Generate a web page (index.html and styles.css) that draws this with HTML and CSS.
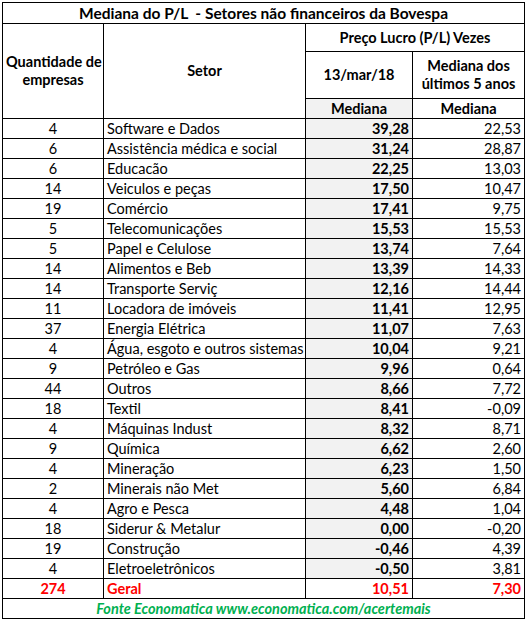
FILE: index.html
```html
<!DOCTYPE html>
<html lang="pt">
<head>
  <meta charset="UTF-8" />
  <title>Mediana do P/L - Setores não financeiros da Bovespa</title>
  <link rel="stylesheet" href="styles.css">
</head>
<body>

  <table class="pl-table">
    <colgroup>
      <col class="c-qtd">
      <col class="c-setor">
      <col class="c-atual">
      <col class="c-hist">
    </colgroup>
    <thead>
      <tr class="title-row">
        <th colspan="4">Mediana do P/L&nbsp; - Setores não financeiros da Bovespa</th>
      </tr>
      <tr class="h-row1">
        <th rowspan="3">Quantidade de<br>empresas</th>
        <th rowspan="3">Setor</th>
        <th colspan="2">Preço Lucro (P/L) Vezes</th>
      </tr>
      <tr class="h-row2">
        <th>13/mar/18</th>
        <th>Mediana dos<br>últimos 5 anos</th>
      </tr>
      <tr class="h-row3">
        <th class="shade">Mediana</th>
        <th>Mediana</th>
      </tr>
    </thead>
    <tbody>
      <tr><td class="qtd">4</td><td class="setor">Software e Dados</td><td class="atual">39,28</td><td class="hist">22,53</td></tr>
      <tr><td class="qtd">6</td><td class="setor">Assistência médica e social</td><td class="atual">31,24</td><td class="hist">28,87</td></tr>
      <tr><td class="qtd">6</td><td class="setor">Educacão</td><td class="atual">22,25</td><td class="hist">13,03</td></tr>
      <tr><td class="qtd">14</td><td class="setor">Veiculos e peças</td><td class="atual">17,50</td><td class="hist">10,47</td></tr>
      <tr><td class="qtd">19</td><td class="setor">Comércio</td><td class="atual">17,41</td><td class="hist">9,75</td></tr>
      <tr><td class="qtd">5</td><td class="setor">Telecomunicações</td><td class="atual">15,53</td><td class="hist">15,53</td></tr>
      <tr><td class="qtd">5</td><td class="setor">Papel e Celulose</td><td class="atual">13,74</td><td class="hist">7,64</td></tr>
      <tr><td class="qtd">14</td><td class="setor">Alimentos e Beb</td><td class="atual">13,39</td><td class="hist">14,33</td></tr>
      <tr><td class="qtd">14</td><td class="setor">Transporte Serviç</td><td class="atual">12,16</td><td class="hist">14,44</td></tr>
      <tr><td class="qtd">11</td><td class="setor">Locadora de imóveis</td><td class="atual">11,41</td><td class="hist">12,95</td></tr>
      <tr><td class="qtd">37</td><td class="setor">Energia Elétrica</td><td class="atual">11,07</td><td class="hist">7,63</td></tr>
      <tr><td class="qtd">4</td><td class="setor">Água, esgoto e outros sistemas</td><td class="atual">10,04</td><td class="hist">9,21</td></tr>
      <tr><td class="qtd">9</td><td class="setor">Petróleo e Gas</td><td class="atual">9,96</td><td class="hist">0,64</td></tr>
      <tr><td class="qtd">44</td><td class="setor">Outros</td><td class="atual">8,66</td><td class="hist">7,72</td></tr>
      <tr><td class="qtd">18</td><td class="setor">Textil</td><td class="atual">8,41</td><td class="hist">-0,09</td></tr>
      <tr><td class="qtd">4</td><td class="setor">Máquinas Indust</td><td class="atual">8,32</td><td class="hist">8,71</td></tr>
      <tr><td class="qtd">9</td><td class="setor">Química</td><td class="atual">6,62</td><td class="hist">2,60</td></tr>
      <tr><td class="qtd">4</td><td class="setor">Mineração</td><td class="atual">6,23</td><td class="hist">1,50</td></tr>
      <tr><td class="qtd">2</td><td class="setor">Minerais não Met</td><td class="atual">5,60</td><td class="hist">6,84</td></tr>
      <tr><td class="qtd">4</td><td class="setor">Agro e Pesca</td><td class="atual">4,48</td><td class="hist">1,04</td></tr>
      <tr><td class="qtd">18</td><td class="setor">Siderur &amp; Metalur</td><td class="atual">0,00</td><td class="hist">-0,20</td></tr>
      <tr><td class="qtd">19</td><td class="setor">Construção</td><td class="atual">-0,46</td><td class="hist">4,39</td></tr>
      <tr><td class="qtd">4</td><td class="setor">Eletroeletrônicos</td><td class="atual">-0,50</td><td class="hist">3,81</td></tr>
      <tr class="total"><td class="qtd">274</td><td class="setor">Geral</td><td class="atual">10,51</td><td class="hist">7,30</td></tr>
    </tbody>
    <tfoot>
      <tr><td colspan="4" class="fonte">Fonte Economatica www.economatica.com/acertemais</td></tr>
    </tfoot>
  </table>

</body>
</html>
```

FILE: styles.css
```css
:root {
  --line: #000;
  --shade: #f2f2f2;
  --red: #ff0000;
  --green: #00b050;
}

* {
  box-sizing: border-box;
}

body {
  margin: 0;
  padding: 2px;
  background: #fff;
  color: #000;
  font-family: Lato, 'Liberation Sans', sans-serif;
  font-size: 14.5px;
}

.pl-table {
  border-collapse: collapse;
  table-layout: fixed;
  width: 522px;
}

.c-qtd { width: 101px; }
.c-setor { width: 202px; }
.c-atual { width: 107px; }
.c-hist { width: 112px; }

th,
td {
  border: 1px solid var(--line);
  padding: 0 3px;
  line-height: 18px;
  white-space: nowrap;
  overflow: hidden;
}

th {
  font-weight: bold;
  text-align: center;
}

.title-row th {
  height: 21px;
  font-size: 15.5px;
}

.h-row1 th {
  height: 28px;
}

.h-row2 th {
  height: 47px;
}

.h-row3 th {
  height: 20px;
}

.shade {
  background: var(--shade);
}

td {
  height: 20px;
}

.qtd {
  text-align: center;
}

.setor {
  text-align: left;
}

.atual {
  text-align: right;
  font-weight: bold;
  background: var(--shade);
}

.hist {
  text-align: right;
}

.total td {
  color: var(--red);
  font-weight: bold;
}

.total .atual {
  background: #fff;
}

.fonte {
  height: 20px;
  text-align: center;
  color: var(--green);
  font-style: italic;
  font-weight: bold;
}
```
